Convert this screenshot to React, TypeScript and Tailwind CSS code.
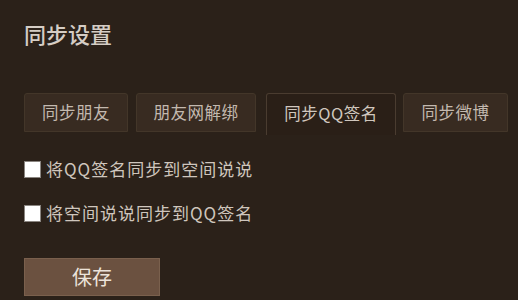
export default function App() {
  const font = { fontFamily: '"Noto Sans CJK SC", "Noto Sans", sans-serif' };
  return (
    <div style={font} className="w-[518px] h-[300px] bg-[#2b2119] overflow-hidden pl-[24px] pt-[18px] flex flex-col">
      <div className="text-[22px] leading-[30px] font-medium text-[#d5cdc5]">同步设置</div>
      <div className="mt-[45px] flex items-start">
        <div className="w-[104px] h-[39px] flex items-center justify-center rounded-t-[3px] border border-[#433629] bg-[#382b21] text-[16.5px] tracking-[0.5px] text-[#c3b9af]">同步朋友</div>
        <div className="ml-[8px] w-[120px] h-[39px] flex items-center justify-center rounded-t-[3px] border border-[#433629] bg-[#382b21] text-[16.5px] tracking-[0.5px] text-[#c3b9af]">朋友网解绑</div>
        <div className="ml-[10px] w-[130px] h-[42px] flex items-center justify-center pb-[3px] rounded-t-[3px] border border-b-0 border-[#4a3c30] bg-[#2a1f17] text-[16.5px] tracking-[0.5px] text-[#d0c7be]">同步QQ签名</div>
        <div className="ml-[7px] w-[105px] h-[39px] flex items-center justify-center rounded-t-[3px] border border-[#433629] bg-[#382b21] text-[16.5px] tracking-[0.5px] text-[#c3b9af]">同步微博</div>
      </div>
      <div className="mt-[24px] flex flex-col gap-[24px]">
        <label className="flex items-center gap-[5px] h-[20px]">
          <span className="w-[17px] h-[17px] bg-white border border-[#8a8580] shrink-0" />
          <span className="text-[17px] text-[#cfc6bd] tracking-[1px]">将QQ签名同步到空间说说</span>
        </label>
        <label className="flex items-center gap-[5px] h-[20px]">
          <span className="w-[17px] h-[17px] bg-white border border-[#8a8580] shrink-0" />
          <span className="text-[17px] text-[#cfc6bd] tracking-[1px]">将空间说说同步到QQ签名</span>
        </label>
      </div>
      <button className="mt-[35px] w-[136px] h-[38px] bg-[#6b5140] border border-[#7a604d] text-[20px] text-[#ece3da] flex items-center justify-center">保存</button>
    </div>
  );
}
